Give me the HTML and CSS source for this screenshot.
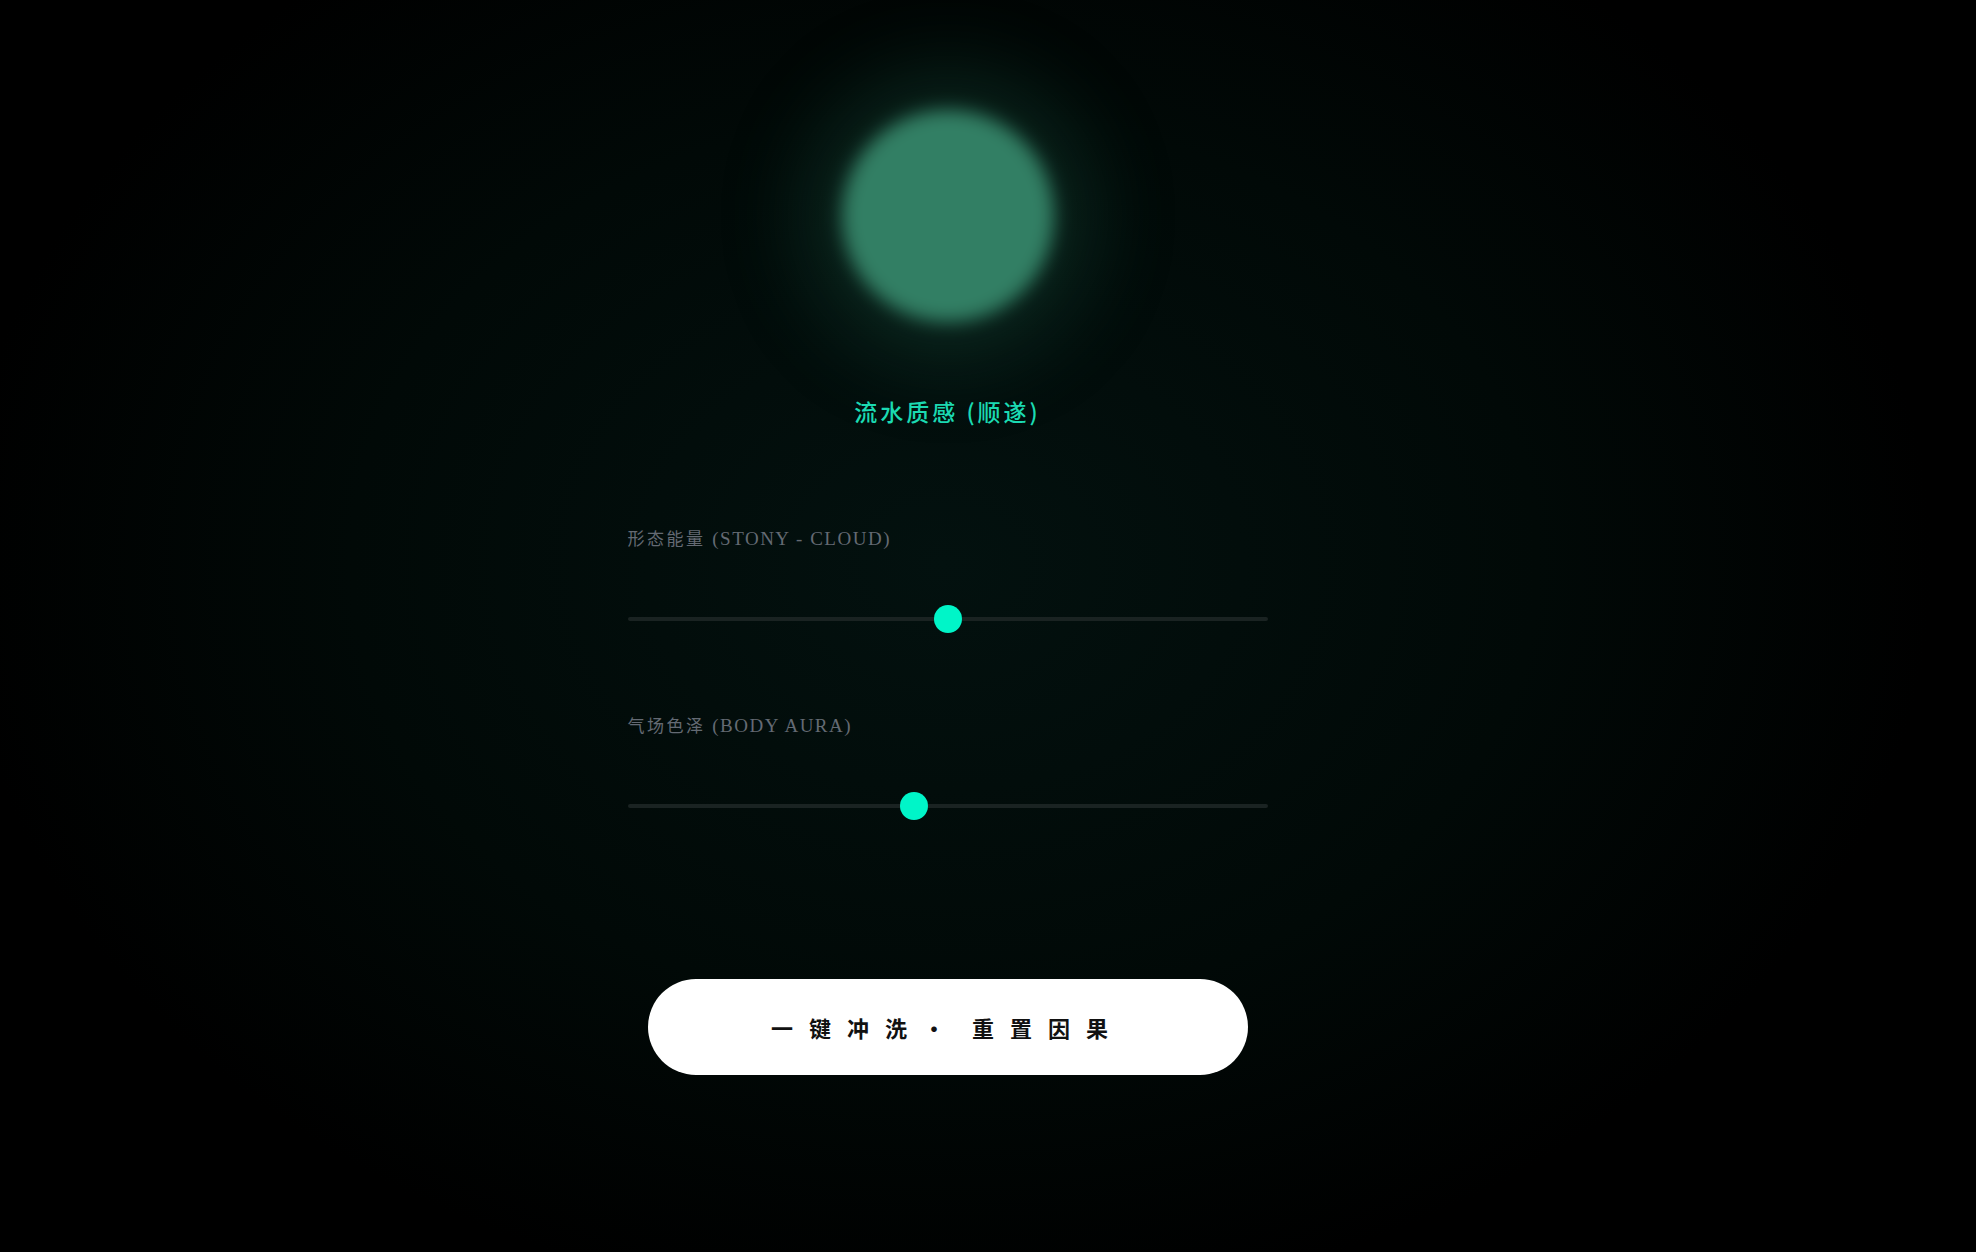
FILE: index.html
```html
<!DOCTYPE html>
<html>
<head>
    <title>流水质感</title>
    <link rel="stylesheet" href="styles.css">
</head>
<body>
    <div class="stage">
        <div class="orb"></div>
        <h2 class="state-title">流水质感 (顺遂)</h2>

        <div class="controls">
            <div class="field">
                <label class="field-label" for="form-energy">形态能量 <span class="en">(STONY - CLOUD)</span></label>
                <input type="range" id="form-energy" class="slider" min="0" max="100" value="50" />
            </div>
            <div class="field">
                <label class="field-label" for="aura">气场色泽 <span class="en">(BODY AURA)</span></label>
                <input type="range" id="aura" class="slider" min="0" max="100" value="44.5" step="0.5" />
            </div>
        </div>

        <button class="reset-btn" type="button">一键冲洗<span class="dot">·</span>重置因果</button>
    </div>
</body>
</html>
```

FILE: styles.css
```css
:root {
    --bg-center: #03110f;
    --bg-mid: #010907;
    --bg-edge: #000000;
    --orb: #327f64;
    --accent: #00f5c8;
    --title: #1cdcb4;
    --label: #646a73;
    --track: #1a2322;
}

html, body {
    height: 100%;
}

body {
    margin: 0;
    background: radial-gradient(ellipse 50% 60% at 47.8% 45%, var(--bg-center) 0%, var(--bg-mid) 60%, var(--bg-edge) 100%);
    background-color: var(--bg-edge);
    font-family: "Liberation Serif", "Noto Sans CJK SC", serif;
    color: var(--label);
    overflow: hidden;
}

/* content column sits a little left of the window centre */
.stage {
    display: flex;
    flex-direction: column;
    align-items: center;
    padding-top: 110px;
    padding-right: 81px;
}

.orb {
    width: 212px;
    height: 212px;
    border-radius: 50%;
    background-color: var(--orb);
    filter: blur(9px);
    box-shadow: 0 0 90px 30px rgba(40, 120, 92, 0.3);
}

.state-title {
    margin: 73px 0 0;
    font-family: "Noto Sans CJK SC", sans-serif;
    font-size: 23px;
    font-weight: 500;
    line-height: 32px;
    letter-spacing: 3px;
    color: var(--title);
}

.controls {
    width: 640px;
    margin-top: 100px;
    display: flex;
    flex-direction: column;
    gap: 81px;
}

.field {
    display: flex;
    flex-direction: column;
    gap: 53px;
}

.field-label {
    font-size: 17px;
    line-height: 24px;
    letter-spacing: 2.5px;
    color: var(--label);
}

.field-label .en {
    font-size: 19px;
    letter-spacing: 1.5px;
}

.slider {
    -webkit-appearance: none;
    appearance: none;
    width: 100%;
    height: 28px;
    margin: 0;
    background: transparent;
    cursor: pointer;
}

.slider::-webkit-slider-runnable-track {
    height: 4px;
    border-radius: 2px;
    background-color: var(--track);
}

.slider::-webkit-slider-thumb {
    -webkit-appearance: none;
    width: 28px;
    height: 28px;
    margin-top: -12px;
    border-radius: 50%;
    background-color: var(--accent);
    border: none;
}

.reset-btn {
    margin-top: 159px;
    width: 600px;
    height: 96px;
    border: none;
    border-radius: 48px;
    background-color: #ffffff;
    color: #111111;
    font-family: "Noto Sans CJK SC", serif;
    font-size: 22px;
    font-weight: 600;
    letter-spacing: 16px;
    padding-left: 6px;
    cursor: pointer;
}

.reset-btn .dot {
    margin-right: 11px;
}
```
